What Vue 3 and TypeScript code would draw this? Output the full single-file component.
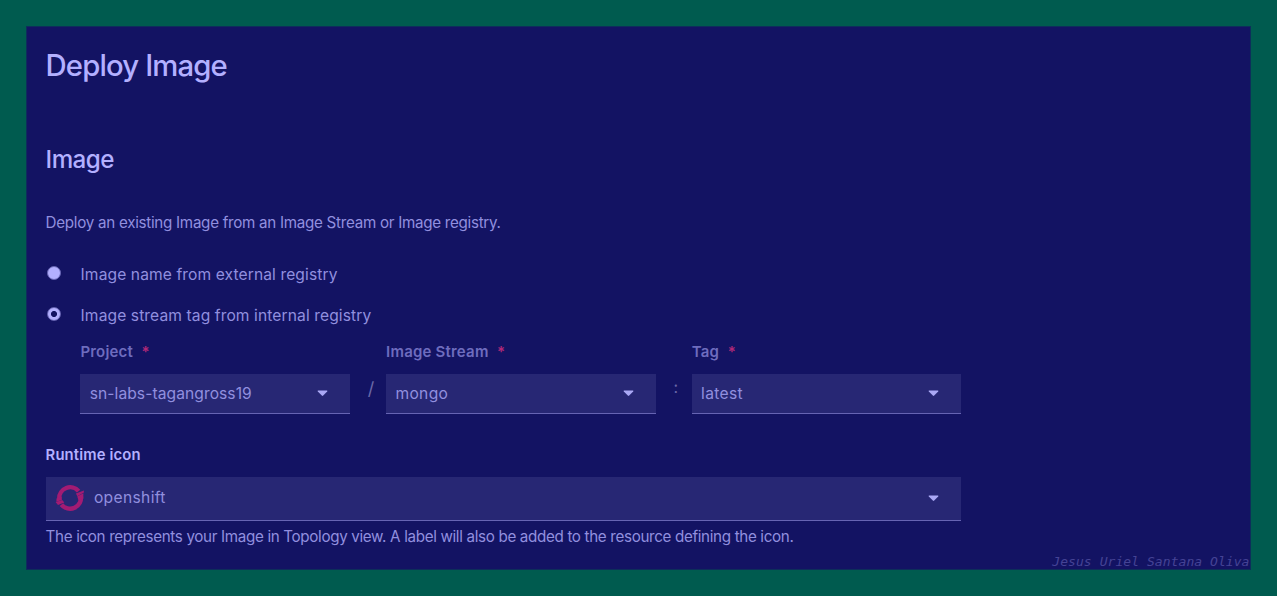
<script setup lang="ts">
interface Field {
  label: string
  value: string
  separator?: string
}

const sources: { label: string; checked: boolean; key: string }[] = [
  { label: 'Image name from external registry', checked: false, key: 'external' },
  { label: 'Image stream tag from internal registry', checked: true, key: 'internal' },
]

const fields: Field[] = [
  { label: 'Project', value: 'sn-labs-tagangross19', separator: '/' },
  { label: 'Image Stream', value: 'mongo', separator: ':' },
  { label: 'Tag', value: 'latest' },
]
</script>

<template>
  <div class="page">
    <main class="panel">
      <h1>Deploy Image</h1>
      <h2>Image</h2>
      <p class="intro">Deploy an existing Image from an Image Stream or Image registry.</p>

      <div v-for="s in sources" :key="s.key" class="radio" :class="s.key">
        <i class="dot" :class="{ checked: s.checked }"></i>
        <span>{{ s.label }}</span>
      </div>

      <div class="fields">
        <template v-for="f in fields" :key="f.label">
          <div class="field">
            <div class="label"><span>{{ f.label }}</span><b>*</b></div>
            <div class="select">
              <span :class="'v-' + f.value">{{ f.value }}</span>
              <svg class="caret" viewBox="0 0 11 7"><path d="M1.2.4h8.6q1 .2.4 1L6.2 5.6q-.7.7-1.4 0L.8 1.4Q.2.6 1.2.4Z" /></svg>
            </div>
          </div>
          <div v-if="f.separator" class="sep" :class="{ colon: f.separator === ':' }">{{ f.separator }}</div>
        </template>
      </div>

      <div class="runtime-label">Runtime icon</div>
      <div class="select runtime">
        <svg class="logo" viewBox="0 0 30 28">
          <g fill="none" stroke="#a31b73" stroke-width="4.4">
            <path d="M4.2 14.6A11 11 0 0 1 23.6 7.2" />
            <path d="M25.8 11.6A11 11 0 0 1 6.4 20.6" />
          </g>
          <g fill="#a31b73">
            <path d="M20.9 9.4 28.9 6.6 28.9 8.6 22.4 12.2Z" />
            <path d="M22.2 12.4 28.4 9.2 28.3 14.8 23.6 16.4Z" />
            <path d="M1.5 14.6 6.6 12.6 6.9 16.1 1.4 17.8Z" />
            <path d="M.6 18 7.2 16 9.3 18.4 3 21Z" />
          </g>
        </svg>
        <span class="v-openshift">openshift</span>
        <svg class="caret" viewBox="0 0 11 7"><path d="M1.2.4h8.6q1 .2.4 1L6.2 5.6q-.7.7-1.4 0L.8 1.4Q.2.6 1.2.4Z" /></svg>
      </div>
      <p class="help">The icon represents your Image in Topology view. A label will also be added to the resource defining the icon.</p>
      <div class="signature">Jesus Uriel Santana Oliva</div>
    </main>
  </div>
</template>

<style>
body {
  margin: 0;
  background: #005b4f;
}
</style>

<style scoped>
.page {
  box-sizing: border-box;
  width: 1277px;
  height: 596px;
  padding: 26px;
  background: #005b4f;
  overflow: hidden;
}
.panel {
  position: relative;
  box-sizing: border-box;
  width: 1225px;
  height: 544px;
  padding: 19px 0 0 18.6px;
  border: 1px solid #0d2e5b;
  background: #131363;
  color: #918fdf;
  font: 15.2px/20px Inter, "Liberation Sans", sans-serif;
  white-space: nowrap;
}
h1, h2, p { margin: 0; }
h1 {
  color: #b3b0ff;
  font-size: 29.3px;
  font-weight: 450;
  line-height: 40px;
  letter-spacing: -0.87px;
}
h2 {
  margin-top: 58px;
  color: #b3b0ff;
  font-size: 24.2px;
  font-weight: 500;
  line-height: 31px;
  letter-spacing: -0.55px;
}
.intro {
  margin-top: 38px;
  letter-spacing: -0.285px;
}
.radio {
  display: flex;
  height: 20px;
  align-items: center;
  font-size: 15.6px;
  letter-spacing: 0.1px;
}
.external { margin-top: 32px; }
.internal { margin-top: 21px; }
.dot {
  box-sizing: border-box;
  width: 14px;
  height: 14px;
  margin: -4px 19.2px 0 1.8px;
  border-radius: 50%;
  background: #b3b0ff;
  border: 1px solid #6664b3;
}
.dot.checked {
  background: radial-gradient(circle, #131363 2.6px, #b3b0ff 3.5px);
}
.fields {
  display: flex;
  margin: 16px 0 0 34.8px;
}
.field { width: 269.7px; }
.label {
  display: flex;
  font-weight: 600;
  font-size: 15px;
  letter-spacing: 0.2px;
  color: #6e6cbe;
}
.label b {
  margin-left: 8.5px;
  color: #b02878;
  font-weight: 600;
}
.select {
  box-sizing: border-box;
  display: flex;
  align-items: center;
  height: 40px;
  margin-top: 12px;
  padding: 0 22px 0 9.3px;
  border-bottom: 1.5px solid #6664b3;
  background: #272774;
  font-size: 15.6px;
  letter-spacing: 0.08px;
}
.v-mongo,
.v-latest,
.v-openshift { letter-spacing: 0.35px; }
.caret {
  width: 11px;
  height: 7px;
  margin-left: auto;
  fill: #aaa8f5;
}
.sep {
  width: 36px;
  padding: 37px 0 0 6px;
  box-sizing: border-box;
  text-align: center;
  font-size: 18px;
  line-height: 20px;
  color: #6a68a8;
}
.sep.colon { padding: 35px 0 0 4px; font-size: 16px; }
.runtime-label {
  margin-top: 31px;
  color: #b3b0ff;
  font-size: 14.8px;
  font-weight: 600;
  letter-spacing: 0.15px;
}
.runtime {
  width: 915.5px;
  height: 43.5px;
  margin-top: 12px;
}
.logo {
  width: 30px;
  height: 28px;
  margin-right: 9px;
}
.help {
  margin-top: 6.5px;
  letter-spacing: -0.335px;
}
.signature {
  position: absolute;
  right: 0.5px;
  bottom: 0;
  color: #454395;
  font: italic 13px/15px "DejaVu Sans Mono", monospace;
  letter-spacing: 0.06px;
}
</style>
